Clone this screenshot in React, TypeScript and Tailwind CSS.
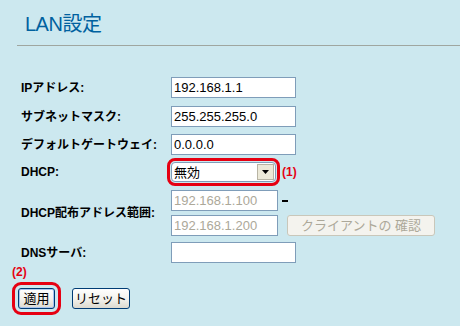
import React from "react";

const label = "font-bold text-[12px] text-black leading-none";
const fieldBase =
  "h-[21px] border border-[#7f9db9] bg-white px-[2px] text-[13px] leading-none outline-none";
const field = `${fieldBase} text-black`;
const fieldOff = `${fieldBase} text-[#aca899]`;
const xpButton =
  "h-[21px] rounded-[3px] border border-[#003c74] bg-gradient-to-b from-white via-[#f4f3ee] to-[#dcdad0] text-[13px] text-black leading-none";

function Row({ name, children }: { name: string; children: React.ReactNode }) {
  return (
    <div className="flex items-center">
      <div className={`w-[150px] ${label}`}>{name}</div>
      {children}
    </div>
  );
}

export default function App() {
  return (
    <div
      className="w-[460px] h-[326px] bg-[#cce8ef] overflow-hidden"
      style={{ fontFamily: '"Liberation Sans", "Noto Sans CJK JP", sans-serif' }}
    >
      {/* title */}
      <div className="ml-[17px] h-[46px] border-b border-[#9fa6a0] pl-[8px] pt-[14px]">
        <h1 className="text-[20px] leading-none text-[#00619f] tracking-[-0.5px]">LAN設定</h1>
      </div>

      {/* form */}
      <div className="pl-[21px] pt-[31px]">
        <Row name="IPアドレス:">
          <input className={`w-[125px] ${field}`} defaultValue="192.168.1.1" />
        </Row>
        <div className="mt-[8px]">
          <Row name="サブネットマスク:">
            <input className={`w-[125px] ${field}`} defaultValue="255.255.255.0" />
          </Row>
        </div>
        <div className="mt-[7px]">
          <Row name="デフォルトゲートウェイ:">
            <input className={`w-[125px] ${field}`} defaultValue="0.0.0.0" />
          </Row>
        </div>
        <div className="mt-[7px]">
          <Row name="DHCP:">
            <div className="flex h-[20px] w-[105px] items-center rounded-[4px] border border-[#7f9db9] bg-white outline-[3px] outline-offset-[1px] outline-solid outline-[#e60012]">
              <span className="flex-1 pl-[2px] text-[13px] leading-none">無効</span>
              <span className="mr-[1px] flex h-[16px] w-[17px] items-center justify-center border border-[#b8b4a4] bg-[#ece9d8]">
                <svg width="7" height="4" viewBox="0 0 7 4">
                  <path d="M0 0h7L3.5 4z" fill="#000" />
                </svg>
              </span>
            </div>
            <span className="ml-[6px] text-[12px] font-bold leading-none text-[#e60012]">(1)</span>
          </Row>
        </div>
        <div className="mt-[8px]">
          <Row name="DHCP配布アドレス範囲:">
            <div className="flex flex-col gap-[4px]">
              <div className="flex items-center">
                <input disabled className={`w-[107px] ${fieldOff}`} defaultValue="192.168.1.100" />
                <span className="ml-[4px] h-[2px] w-[6px] bg-black" />
              </div>
              <div className="flex items-center">
                <input disabled className={`w-[107px] ${fieldOff}`} defaultValue="192.168.1.200" />
                <button
                  disabled
                  className="ml-[9px] h-[21px] w-[148px] rounded-[3px] border border-[#c9c7ba] bg-[#f4f3ee] text-[13px] leading-none text-[#aca899]"
                >
                  クライアントの 確認
                </button>
              </div>
            </div>
          </Row>
        </div>
        <div className="mt-[6px]">
          <Row name="DNSサーバ:">
            <input className={`w-[125px] ${field}`} defaultValue="" />
          </Row>
        </div>
      </div>

      {/* actions */}
      <div className="pl-[12px] pt-[3px]">
        <div className="text-[12px] font-bold leading-none text-[#e60012]">(2)</div>
        <div className="mt-[10px] flex items-center pl-[6px]">
          <button
            className={`w-[37px] ${xpButton} shadow-[inset_0_0_0_1px_#a8c4f0] outline-[3px] outline-offset-[3px] outline-solid outline-[#e60012]`}
          >
            適用
          </button>
          <button className={`ml-[17px] w-[58px] ${xpButton}`}>リセット</button>
        </div>
      </div>
    </div>
  );
}
